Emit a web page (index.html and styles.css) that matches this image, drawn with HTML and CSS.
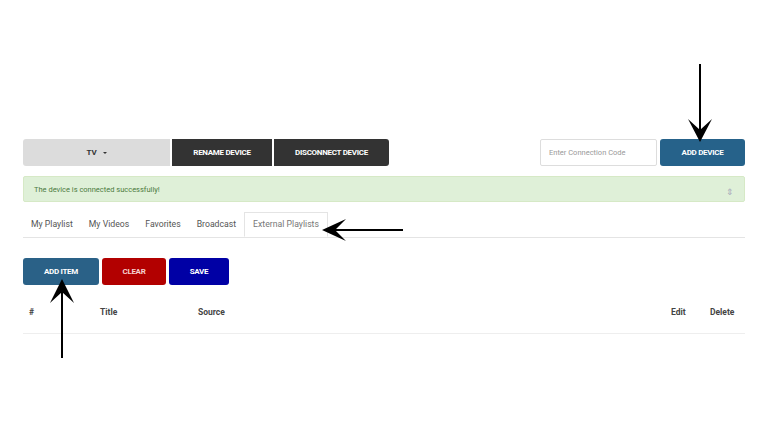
FILE: index.html
```html
<!DOCTYPE html>
<html lang="en">
<head>
    <meta charset="UTF-8">
    <meta name="viewport" content="width=device-width, initial-scale=1.0">
    <title>Devices</title>
    <link rel="stylesheet" href="styles.css">
</head>
<body>

<div class="page">
    <div class="device-bar">
        <div class="device-left">
            <button class="device-select">TV <span class="caret"></span></button>
            <button class="dark-btn rename-btn">RENAME DEVICE</button>
            <button class="dark-btn disconnect-btn">DISCONNECT DEVICE</button>
        </div>
        <div class="device-right">
            <input type="text" class="code-input" placeholder="Enter Connection Code">
            <button class="add-device-btn">ADD DEVICE</button>
        </div>
    </div>

    <div class="alert">
        <span>The device is connected successfully!</span>
        <span class="alert-close">&#8661;</span>
    </div>

    <ul class="tabs">
        <li>My Playlist</li>
        <li>My Videos</li>
        <li>Favorites</li>
        <li>Broadcast</li>
        <li class="active">External Playlists</li>
    </ul>

    <div class="actions">
        <button class="act-btn add-item">ADD ITEM</button>
        <button class="act-btn clear">CLEAR</button>
        <button class="act-btn save">SAVE</button>
    </div>

    <table class="items">
        <thead>
            <tr>
                <th class="col-num">#</th>
                <th class="col-title">Title</th>
                <th class="col-source">Source</th>
                <th class="col-edit">Edit</th>
                <th class="col-delete">Delete</th>
            </tr>
        </thead>
    </table>
</div>

<!-- annotation arrows -->
<svg class="arrow arrow-down" width="30" height="80" viewBox="0 0 30 80">
    <line x1="15" y1="0" x2="15" y2="70" stroke="#000" stroke-width="2"/>
    <path d="M3 55 L15 78 L27 55 L15 66 Z" fill="#000"/>
</svg>
<svg class="arrow arrow-left" width="82" height="30" viewBox="0 0 82 30">
    <line x1="10" y1="15" x2="82" y2="15" stroke="#000" stroke-width="2"/>
    <path d="M25 4 L1 15 L25 26 L14 15 Z" fill="#000"/>
</svg>
<svg class="arrow arrow-up" width="30" height="80" viewBox="0 0 30 80">
    <line x1="15" y1="10" x2="15" y2="80" stroke="#000" stroke-width="2"/>
    <path d="M3 25 L15 1 L27 25 L15 14 Z" fill="#000"/>
</svg>

</body>
</html>
```

FILE: styles.css
```css
/* Basic page styling */
body {
    margin: 0;
    background: #fff;
    font-family: Roboto, "Liberation Sans", Arial, sans-serif;
    color: #333;
}
.page {
    width: 722px;
    margin-left: 23px;
    padding-top: 139px;
}
button {
    font-family: Roboto, "Liberation Sans", Arial, sans-serif;
    cursor: pointer;
}
.device-bar {
    display: flex;
    justify-content: space-between;
    height: 27px;
}
.device-left, .device-right {
    display: flex;
    gap: 2px;
}
.device-select {
    width: 147px;
    background: #dcdcdc;
    border: none;
    border-radius: 3px 0 0 3px;
    font-size: 8px;
    font-weight: bold;
    color: #333;
}
.caret {
    display: inline-block;
    width: 0;
    height: 0;
    margin-left: 4px;
    vertical-align: middle;
    border-left: 2.5px solid transparent;
    border-right: 2.5px solid transparent;
    border-top: 2.5px solid #333;
}
.dark-btn {
    background: #333;
    color: #fff;
    border: none;
    font-size: 8px;
    font-weight: bold;
    letter-spacing: -0.3px;
}
.rename-btn {
    width: 100px;
}
.disconnect-btn {
    width: 115px;
    border-radius: 0 3px 3px 0;
}
.code-input {
    width: 117px;
    box-sizing: border-box;
    border: 1px solid #ddd;
    border-radius: 2px;
    padding: 0 8px;
    font-size: 7.5px;
    font-family: Roboto, "Liberation Sans", Arial, sans-serif;
    outline: none;
}
.code-input::placeholder {
    color: #999;
}
.device-right {
    gap: 3px;
}
.add-device-btn {
    width: 85px;
    background: #26628a;
    color: #fff;
    border: none;
    border-radius: 3px;
    font-size: 8px;
    font-weight: bold;
    letter-spacing: -0.3px;
}
.alert {
    margin-top: 10px;
    height: 26px;
    box-sizing: border-box;
    background: #dff0d8;
    border: 1px solid #d6e9c6;
    border-radius: 2px;
    color: #4b7a3d;
    font-size: 7.5px;
    display: flex;
    align-items: center;
    justify-content: space-between;
    padding: 0 10px;
}
.alert-close {
    color: #aab;
    font-size: 9px;
    margin-top: 6px;
}
.tabs {
    list-style: none;
    margin: 10px 0 0;
    padding: 0;
    display: flex;
    height: 25px;
    border-bottom: 1px solid #e4e4e4;
    font-size: 8.7px;
    color: #555;
}
.tabs li {
    padding: 0 8px;
    line-height: 25px;
}
.tabs li.active {
    border: 1px solid #e4e4e4;
    border-bottom-color: #fff;
    line-height: 23px;
    height: 25px;
    box-sizing: border-box;
    color: #777;
    background: #fff;
}
.actions {
    margin-top: 20px;
    display: flex;
    gap: 3px;
}
.act-btn {
    height: 27px;
    border: none;
    border-radius: 3px;
    color: #fff;
    font-size: 8px;
    font-weight: bold;
    letter-spacing: -0.3px;
}
.add-item {
    width: 76px;
    background: #2a6187;
}
.clear {
    width: 64px;
    background: #b20000;
    color: #f4d0d0;
}
.save {
    width: 60px;
    background: #0000a5;
}
.items {
    width: 100%;
    margin-top: 12px;
    border-collapse: collapse;
    font-size: 8.5px;
}
.items th {
    text-align: left;
    font-weight: bold;
    color: #444;
    line-height: 10px;
    padding: 10px 0 16px;
    border-bottom: 1px solid #eee;
}
.items th.col-num {
    width: 71px;
    padding-left: 6px;
}
.col-title {
    width: 98px;
}
.col-edit {
    width: 39px;
}
.col-delete {
    width: 35px;
}
.arrow {
    position: absolute;
}
.arrow-down {
    left: 685px;
    top: 64px;
}
.arrow-left {
    left: 321px;
    top: 215px;
}
.arrow-up {
    left: 47px;
    top: 278px;
}
```
